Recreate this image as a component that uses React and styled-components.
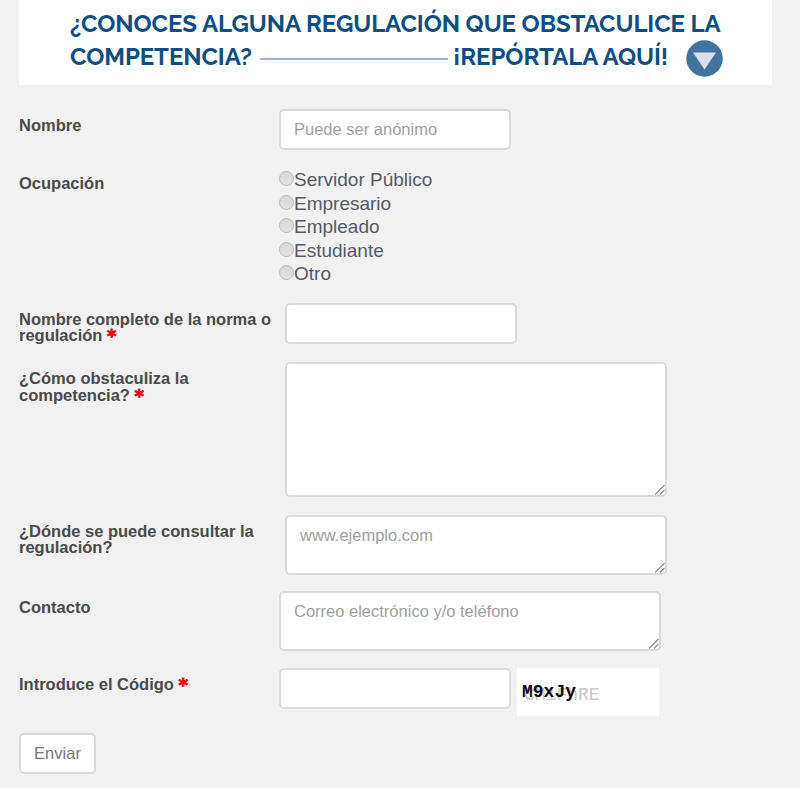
import React from "react";
import styled, { createGlobalStyle } from "styled-components";

const GlobalStyle = createGlobalStyle`
  *, *::before, *::after { box-sizing: border-box; }
  body {
    margin: 0;
    background: #f1f1f1;
    font-family: "Liberation Sans", Arial, sans-serif;
  }
`;

const Page = styled.main`
  width: 800px;
  height: 788px;
  padding: 0 29px 0 19px;
  overflow: hidden;
`;

const Banner = styled.header`
  height: 85px;
  width: 753px;
  padding: 6px 0 0 51px;
  background: #fff;
  color: #0e4e86;
  font-family: Raleway, Lato, sans-serif;
  font-weight: 700;
  font-size: 24px;
  line-height: 35px;
`;

const BannerLine = styled.div`
  display: flex;
  height: 33px;
  white-space: nowrap;
`;

const Phrase = styled.span`
  letter-spacing: -0.08px;
  width: ${(p) => p.$width}px;
`;

const Rule = styled.span`
  width: 188px;
  height: 2px;
  margin: 19px 5px 0 8px;
  background: #9bb5d0;
`;

const Arrow = styled.svg`
  width: 37px;
  height: 37px;
  margin: 1px 0 0 18px;
  flex: none;
`;

const Form = styled.form`
  padding-top: 24px;
`;

const Row = styled.div`
  display: grid;
  grid-template-columns: ${(p) => (p.$wide ? 266 : 260)}px auto;
  justify-content: start;
  align-items: start;
  height: ${(p) => p.$height}px;
`;

const Label = styled.label`
  padding-top: ${(p) => p.$top ?? 8}px;
  color: #4a4a4a;
  font-weight: 700;
  font-size: 16.5px;
  line-height: 16.5px;
  white-space: nowrap;
`;

const Required = styled.span`
  color: #f00;
  font-family: "DejaVu Sans", sans-serif;
  font-size: 18px;
  line-height: 0;
  vertical-align: -1px;
  -webkit-text-stroke: 0.8px #f00;
`;

const Input = styled.input`
  display: block;
  width: 232px;
  height: 41px;
  padding: 0 13px 1px;
  border: 2px solid #dadada;
  border-radius: 5px;
  background: #fff;
  font: 16.5px "Liberation Sans", Arial, sans-serif;
  color: #555;
  outline: none;
  &::placeholder { color: #a0a0a0; opacity: 1; }
`;

const AreaBox = styled.div`
  position: relative;
  width: 382px;
  height: ${(p) => p.$height}px;
`;

const Area = styled(Input)`
  width: 100%;
  height: 100%;
  padding: 8px 13px;
  line-height: 20px;
  resize: none;
`;

const Grip = styled.svg`
  position: absolute;
  right: 2px;
  bottom: 2px;
  width: 10px;
  height: 10px;
`;

const Options = styled.div`
  display: flex;
  flex-direction: column;
`;

const Option = styled.label`
  display: flex;
  height: 23.6px;
  color: #555a68;
  font-size: 19px;
  line-height: 23.6px;
`;

const Radio = styled.input`
  appearance: none;
  width: 15px;
  height: 15px;
  margin: 3px 0 0 0;
  border: 1.5px solid #b8b8b8;
  border-radius: 50%;
  background: linear-gradient(#d8d8d8, #e4e4e4);
`;

const CodeGroup = styled.div`
  display: flex;
  gap: 6px;
`;

const Captcha = styled.div`
  position: relative;
  width: 142px;
  height: 48px;
  background: #fff;
  font-family: "Liberation Mono", monospace;
  line-height: 20px;
`;

const Noise = styled.span`
  position: absolute;
  left: 7px;
  top: 17px;
  color: #c8c8c8;
  font-size: 18px;
`;

const Code = styled.span`
  position: absolute;
  left: 5px;
  top: 14px;
  color: #0a0a0a;
  font-weight: 700;
  font-size: 18px;
`;

const Submit = styled.button`
  display: block;
  width: 77px;
  height: 41px;
  padding: 0;
  border: 2px solid #dadada;
  border-radius: 5px;
  background: #fff;
  color: #777;
  font: 16.5px "Liberation Sans", Arial, sans-serif;
`;

const occupations = ["Servidor Público", "Empresario", "Empleado", "Estudiante", "Otro"];

function TextArea({ height, ...rest }) {
  return (
    <AreaBox $height={height}>
      <Area as="textarea" {...rest} />
      <Grip viewBox="0 0 10 10" fill="none" stroke="#8a8a8a" strokeWidth="1.2">
        <path d="M0 9.5L9.5 0M5 9.5L9.5 5" />
      </Grip>
    </AreaBox>
  );
}

export default function App() {
  return (
    <Page>
      <GlobalStyle />
      <Banner>
        <BannerLine>
          <Phrase>¿CONOCES ALGUNA REGULACIÓN QUE OBSTACULICE LA</Phrase>
        </BannerLine>
        <BannerLine>
          <Phrase $width={182}>COMPETENCIA?</Phrase>
          <Rule />
          <Phrase $width={215}>¡REPÓRTALA AQUÍ!</Phrase>
          <Arrow viewBox="0 0 37 37">
            <circle cx="18.5" cy="18.5" r="18.2" fill="#4173a1" />
            <path d="M7 12.5H30L18.5 29.5Z" fill="#dcdeed" />
          </Arrow>
        </BannerLine>
      </Banner>
      <Form>
        <Row $height={59}>
          <Label htmlFor="nombre">Nombre</Label>
          <Input id="nombre" placeholder="Puede ser anónimo" />
        </Row>
        <Row $height={134.5}>
          <Label as="span" $top={7}>Ocupación</Label>
          <Options>
            {occupations.map((name) => (
              <Option key={name}>
                <Radio type="radio" name="ocupacion" />
                {name}
              </Option>
            ))}
          </Options>
        </Row>
        <Row $height={59.5} $wide>
          <Label htmlFor="norma">
            Nombre completo de la norma o<br />regulación <Required>*</Required>
          </Label>
          <Input id="norma" />
        </Row>
        <Row $height={152.5} $wide>
          <Label htmlFor="como">
            ¿Cómo obstaculiza la<br />competencia? <Required>*</Required>
          </Label>
          <TextArea id="como" height={135} />
        </Row>
        <Row $height={76.5} $wide>
          <Label htmlFor="donde">
            ¿Dónde se puede consultar la<br />regulación?
          </Label>
          <TextArea id="donde" height={60} placeholder="www.ejemplo.com" />
        </Row>
        <Row $height={77}>
          <Label htmlFor="contacto">Contacto</Label>
          <TextArea id="contacto" height={60} placeholder="Correo electrónico y/o teléfono" />
        </Row>
        <Row $height={65}>
          <Label htmlFor="codigo">
            Introduce el Código <Required>*</Required>
          </Label>
          <CodeGroup>
            <Input id="codigo" />
            <Captcha>
              <Noise>CM1FhRE</Noise>
              <Code>M9xJy</Code>
            </Captcha>
          </CodeGroup>
        </Row>
        <Submit type="button">Enviar</Submit>
      </Form>
    </Page>
  );
}
